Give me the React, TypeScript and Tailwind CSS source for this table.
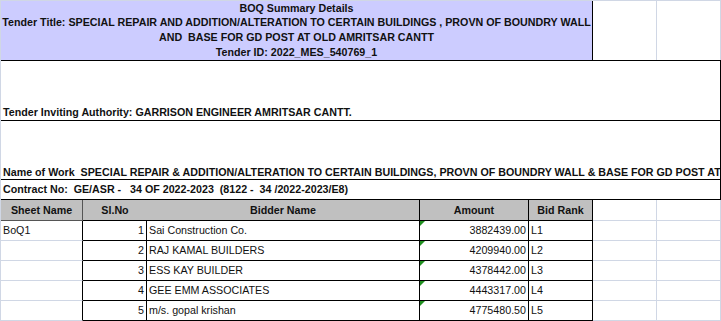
const bids = [
	{ sheet: 'BoQ1', no: 1, name: 'Sai Construction Co.', amount: '3882439.00', rank: 'L1' },
	{ sheet: '', no: 2, name: 'RAJ KAMAL BUILDERS', amount: '4209940.00', rank: 'L2' },
	{ sheet: '', no: 3, name: 'ESS KAY BUILDER', amount: '4378442.00', rank: 'L3' },
	{ sheet: '', no: 4, name: 'GEE EMM ASSOCIATES', amount: '4443317.00', rank: 'L4' },
	{ sheet: '', no: 5, name: 'm/s. gopal krishan', amount: '4775480.50', rank: 'L5' },
];

export default function App() {
	return (
		<div className="w-[721px] h-[321px] overflow-hidden bg-white border-l border-t border-[#d0d7e5] font-['Liberation_Sans',Arial,sans-serif] text-[10.7px] text-[#111]">
			{/* Title block */}
			<div className="flex h-[60px] border-b border-black">
				<div className="w-[592px] shrink-0 bg-[#ccccff] border-r border-black font-bold text-center">
					<div className="h-[14px] leading-[14px]">BOQ Summary Details</div>
					<div className="leading-[15px] whitespace-pre">
						{'Tender Title: SPECIAL REPAIR AND ADDITION/ALTERATION TO CERTAIN BUILDINGS , PROVN OF BOUNDRY WALL'}
						<br />
						{'AND  BASE FOR GD POST AT OLD AMRITSAR CANTT'}
						<br />
						{'Tender ID: 2022_MES_540769_1'}
					</div>
				</div>
				<div className="w-[64px] shrink-0 border-r border-[#d0d7e5]" />
				<div className="w-[64px] shrink-0 border-r border-[#d0d7e5]" />
			</div>

			{/* Info rows */}
			<div className="border-r border-black font-bold">
				<div className="h-[60px] flex items-end px-[2px] border-b border-black">
					<span className="leading-[15px] whitespace-nowrap">Tender Inviting Authority: GARRISON ENGINEER AMRITSAR CANTT.</span>
				</div>
				<div className="h-[59px] flex items-end px-[2px] border-b border-black overflow-hidden">
					<span className="leading-[14px] whitespace-pre">
						{'Name of Work  SPECIAL REPAIR & ADDITION/ALTERATION TO CERTAIN BUILDINGS, PROVN OF BOUNDRY WALL & BASE FOR GD POST AT OLD AMRITSAR CANTT'}
					</span>
				</div>
				<div className="h-[20px] flex items-center px-[2px] border-b border-black">
					<span className="whitespace-pre">{'Contract No:  GE/ASR -   34 OF 2022-2023  (8122 -  34 /2022-2023/E8)'}</span>
				</div>
			</div>

			{/* Table header */}
			<div className="flex h-[21px] font-bold">
				<div className="w-[82px] shrink-0 bg-[#c0c0c0] border-r border-b border-[#555] flex items-center justify-center">Sheet Name</div>
				<div className="w-[64px] shrink-0 bg-[#c0c0c0] border-b border-black flex items-center justify-center">Sl.No</div>
				<div className="w-[273px] shrink-0 bg-[#c0c0c0] border-r border-b border-black flex items-center justify-center">Bidder Name</div>
				<div className="w-[109px] shrink-0 bg-[#c0c0c0] border-r border-b border-black flex items-center justify-center">Amount</div>
				<div className="w-[64px] shrink-0 bg-[#c0c0c0] border-r border-b border-black flex items-center justify-center">Bid Rank</div>
				<div className="w-[64px] shrink-0 border-r border-b border-[#d0d7e5]" />
				<div className="w-[64px] shrink-0 border-r border-b border-[#d0d7e5]" />
			</div>

			{/* Table rows */}
			{bids.map((b) => (
				<div key={b.no} className="flex h-[20px]">
					<div className="w-[82px] shrink-0 border-r border-r-black border-b border-b-[#d0d7e5] flex items-center px-[2px]">
						{b.sheet}
					</div>
					<div className="w-[64px] shrink-0 border-r border-b border-black flex items-center justify-end px-[2px]">{b.no}</div>
					<div className="w-[273px] shrink-0 border-r border-b border-black flex items-center px-[2px]">{b.name}</div>
					<div className="relative w-[109px] shrink-0 border-r border-b border-black flex items-center justify-end px-[2px]">
						<span className="absolute left-0 top-0 w-0 h-0 border-t-[5px] border-r-[5px] border-t-[#1f8f1f] border-r-transparent" />
						{b.amount}
					</div>
					<div className="w-[64px] shrink-0 border-r border-b border-black flex items-center px-[2px]">{b.rank}</div>
					<div className="w-[64px] shrink-0 border-r border-b border-[#d0d7e5]" />
					<div className="w-[64px] shrink-0 border-r border-b border-[#d0d7e5]" />
				</div>
			))}
		</div>
	);
}
